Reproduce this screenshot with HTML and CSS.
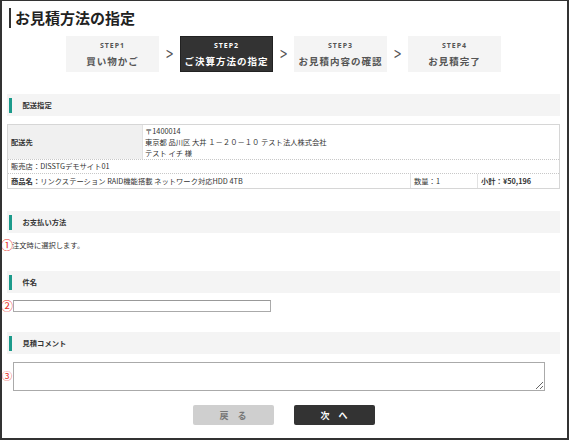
FILE: index.html
```html
<!DOCTYPE html>
<html lang="ja">
<head>
<meta charset="utf-8">
<title>お見積方法の指定</title>
<link rel="stylesheet" href="styles.css">
</head>
<body>
<div class="frame">
  <h1 class="title">お見積方法の指定</h1>
  <div class="steps">
    <div class="step"><span class="step-no">STEP1</span><span class="step-name">買い物かご</span></div>
    <span class="chev">&gt;</span>
    <div class="step current"><span class="step-no">STEP2</span><span class="step-name">ご決算方法の指定</span></div>
    <span class="chev">&gt;</span>
    <div class="step"><span class="step-no">STEP3</span><span class="step-name">お見積内容の確認</span></div>
    <span class="chev">&gt;</span>
    <div class="step"><span class="step-no">STEP4</span><span class="step-name">お見積完了</span></div>
  </div>

  <div class="sec sec-first">配送指定</div>
  <div class="ship">
    <div class="ship-row1">
      <div class="ship-label">配送先</div>
      <div class="ship-addr">〒1400014<br>東京都 品川区 大井 １－２０－１０ テスト法人株式会社<br>テスト イチ 様</div>
    </div>
    <div class="ship-row2">販売店：DISSTGデモサイト01</div>
    <div class="ship-row3">
      <div class="item"><b>商品名：</b>リンクステーション RAID機能搭載 ネットワーク対応HDD 4TB</div>
      <div class="qty">数量：1</div>
      <div class="sub">小計：¥50,196</div>
    </div>
  </div>

  <div class="sec sec-gap">お支払い方法</div>
  <div class="note-row"><span class="num">①</span>注文時に選択します。</div>

  <div class="sec sec-gap2">件名</div>
  <div class="input-row"><span class="num">②</span><input class="subject" type="text"></div>

  <div class="sec sec-gap3">見積コメント</div>
  <div class="ta-row"><span class="num num3">③</span><textarea class="comment"></textarea></div>

  <div class="buttons">
    <button class="btn back">戻　る</button>
    <button class="btn next">次　へ</button>
  </div>
</div>
</body>
</html>
```

FILE: styles.css
```css
* { box-sizing: border-box; }
html, body { margin: 0; padding: 0; background: #fff; }
body {
  font-family: "Noto Sans CJK JP", "Noto Sans", sans-serif;
  color: #333;
}
.frame {
  width: 569px;
  height: 440px;
  border: 2px solid #333;
  border-top-width: 1px;
  padding: 0 7px 0 5px;
  overflow: hidden;
}
.title {
  margin: 7px 0 0 2px;
  border-left: 2px solid #333;
  padding-left: 4px;
  font-size: 15px;
  line-height: 20px;
  font-weight: 700;
  color: #222;
}
.steps {
  display: flex;
  justify-content: center;
  align-items: center;
  margin-top: 8px;
}
.step {
  width: 93px;
  height: 36px;
  background: #f4f4f4;
  display: flex;
  flex-direction: column;
  align-items: center;
  justify-content: center;
  color: #555;
}
.step.current { background: #333; color: #fff; border: 1px solid #222; }
.step-no {
  font-family: "Noto Sans", sans-serif;
  font-size: 7px;
  font-weight: 700;
  letter-spacing: 1px;
  line-height: 10px;
}
.step-name {
  font-size: 9.5px;
  font-weight: 700;
  letter-spacing: 1px;
  line-height: 14px;
  margin-top: 3px;
}
.chev {
  width: 21px;
  text-align: center;
  font-family: "DejaVu Sans", sans-serif;
  font-size: 15px;
  color: #555;
  transform: scaleX(0.65);
  line-height: 1;
}
.sec {
  display: flex;
  align-items: center;
  height: 22px;
  background: #f4f4f4;
  padding-left: 2px;
  font-size: 7.3px;
  font-weight: 700;
  color: #333;
}
.sec::before {
  content: "";
  width: 2.5px;
  height: 15px;
  background: #1c9a8b;
  margin-right: 11px;
}
.sec-first { margin-top: 22px; }
.sec-gap { margin-top: 22px; }
.sec-gap2 { margin-top: 21px; }
.sec-gap3 { margin-top: 20px; }

.ship {
  margin-top: 8px;
  border: 1px solid #d6d6d6;
  font-size: 7.3px;
  color: #333;
}
.ship-row1 { display: flex; height: 34px; }
.ship-label {
  width: 135px;
  background: #f0f0f0;
  font-weight: 700;
  display: flex;
  align-items: center;
  padding-left: 3px;
  border-right: 1px solid #e2e2e2;
}
.ship-addr { padding: 1px 0 0 2px; line-height: 11px; }
.ship-row2 {
  height: 14px;
  line-height: 13px;
  border-top: 1px dotted #c8c8c8;
  padding-left: 3px;
}
.ship-row3 {
  display: flex;
  height: 15px;
  line-height: 14px;
  border-top: 1px dotted #c8c8c8;
}
.item { flex: 1; padding-left: 3px; }
.item b { font-weight: 700; }
.qty { width: 67px; border-left: 1px solid #e2e2e2; padding-left: 3px; }
.sub { width: 82px; border-left: 1px solid #e2e2e2; padding-left: 3px; font-weight: 700; }

.num {
  color: #e8302a;
  font-size: 12px;
  width: 10px;
  display: inline-flex;
  justify-content: center;
  flex: none;
  line-height: 1;
}
.num3 { font-size: 10.5px; }
.note-row {
  display: flex;
  align-items: center;
  margin: 6px 0 0 -5px;
  font-size: 7.3px;
  color: #333;
  height: 11px;
}
.input-row {
  display: flex;
  align-items: center;
  margin: 7px 0 0 -5px;
  height: 12px;
}
.subject {
  width: 258px;
  height: 12px;
  margin: 0 0 0 1px;
  padding: 0;
  border: 1px solid #aaa;
  border-top-color: #999;
  background: #fff;
}
.ta-row {
  display: flex;
  align-items: center;
  margin: 8px 0 0 -5px;
  height: 29px;
}
.comment {
  width: 532px;
  height: 29px;
  margin: 0 0 0 1px;
  padding: 0;
  border: 1px solid #aaa;
  resize: vertical;
  font-family: inherit;
}
.buttons {
  display: flex;
  justify-content: center;
  gap: 20px;
  margin-top: 14px;
}
.btn {
  width: 81px;
  height: 20px;
  border: none;
  border-radius: 2px;
  font-family: "Noto Sans CJK JP", sans-serif;
  font-size: 9px;
  font-weight: 700;
  padding: 0;
}
.btn.back { background: #cfcfcf; color: #777; }
.btn.next { background: #333; color: #fff; }
```
